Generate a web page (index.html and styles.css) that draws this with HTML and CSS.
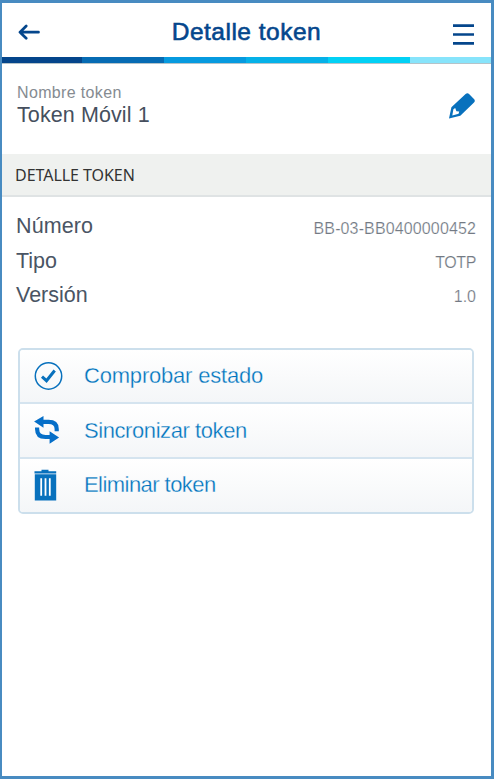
FILE: index.html
```html
<!DOCTYPE html>
<html lang="es">
<head>
<meta charset="utf-8">
<title>Detalle token</title>
<link rel="stylesheet" href="styles.css">
</head>
<body>
<main class="screen">
  <header class="topbar">
    <svg class="back" width="22" height="16" viewBox="0 0 22 16"><path d="M20.5 8.2H2M8.2 2 2 8.2l6.2 6" fill="none" stroke="#04468c" stroke-width="2.7" stroke-linecap="round" stroke-linejoin="round"/></svg>
    <h1 class="title">Detalle token</h1>
    <svg class="menu" width="21" height="22" viewBox="0 0 21 22"><path d="M0 1.6h21M0 10.5h21M0 19.4h21" stroke="#04468c" stroke-width="2.6"/></svg>
  </header>
  <div class="stripe"><i class="s1"></i><i class="s2"></i><i class="s3"></i><i class="s4"></i><i class="s5"></i><i class="s6"></i></div>
  <section class="name">
    <div>
      <p class="caption">Nombre token</p>
      <p class="value">Token Móvil 1</p>
    </div>
    <svg class="pencil" width="26" height="26" viewBox="0 0 26 26"><path fill="#0871bd" fill-rule="evenodd" d="M0 25.5 2.4 14.2 16.6 1Q18.5-.6 20.3 1.2L25.2 6.3Q26.5 7.8 25 9.6L11.3 22.8ZM3.3 22.4l6.3-1.6.6-2.2-2.8-.4-1.2-3.2-1.8 1.2Z"/></svg>
  </section>
  <h2 class="section">DETALLE TOKEN</h2>
  <dl class="details">
    <div class="row"><dt class="numero">Número</dt><dd class="code">BB-03-BB0400000452</dd></div>
    <div class="row"><dt>Tipo</dt><dd class="totp">TOTP</dd></div>
    <div class="row"><dt>Versión</dt><dd>1.0</dd></div>
  </dl>
  <nav class="actions">
    <a class="action"><svg width="30" height="30" viewBox="0 0 30 30"><circle cx="14.5" cy="15" r="13.2" fill="none" stroke="#0871bd" stroke-width="1.5"/><path d="m8 15.6 4.5 4.1 8.2-10.2" fill="none" stroke="#0871bd" stroke-width="3"/></svg><span class="a1">Comprobar estado</span></a>
    <a class="action"><svg width="30" height="30" viewBox="0 0 30 30"><g fill="none" stroke="#066fc8" stroke-width="4.2"><path d="M8 6.9h6.5q8.2 0 8.2 7v2.3"/><path d="M3.1 12.4v1.6q0 8 8.4 8H18"/></g><path fill="#066fc8" d="M.1 6.4 9.5 1v11.8ZM25.1 22.4 15.6 16.2v12.6Z"/></svg><span class="a2">Sincronizar token</span></a>
    <a class="action"><svg width="30" height="32" viewBox="0 0 30 32"><path fill="#0871bd" d="M.5 2.2h7V.8h7v1.4h7.7v2.4H.5ZM.8 5.2h21.4v26.2H.8Z"/><path d="M7.2 9.2v17.6M11.5 9.2v17.6M15.8 9.2v17.6" stroke="#fff" stroke-width="1.8"/></svg><span class="a3">Eliminar token</span></a>
  </nav>
</main>
</body>
</html>
```
FILE: styles.css
```css
* { box-sizing: border-box; }
body { margin: 0; background: #fff; font-family: "Liberation Sans", Arial, sans-serif; }
h1, h2, p, dl, dd { margin: 0; font-weight: 400; white-space: nowrap; }
.screen { height: 779px; border: solid #488bc1; border-width: 3px 3px 3px 2px; display: flex; flex-direction: column; }
.topbar { height: 54px; flex: none; display: flex; align-items: center; justify-content: space-between; padding: 4px 17px 0 16px; }
.title { font-size: 24.5px; line-height: 28px; color: #04468c; -webkit-text-stroke: .6px #04468c; letter-spacing: .5px; margin-bottom: 1px; }
.back { margin-bottom: 1px; }
.menu { margin-top: 5px; }
.stripe { height: 7px; flex: none; display: grid; grid-template-columns: 80px 82px 82px 82px 82px 1fr; border-bottom: 1px solid #b5c3c9; }
.s1 { background: #04458b; }
.s2 { background: #066bb3; }
.s3 { background: #069adf; }
.s4 { background: #05b1e8; }
.s5 { background: #02d1f5; }
.s6 { background: #87e4fb; }
.name { height: 90px; flex: none; display: flex; justify-content: space-between; padding: 20px 16px 0 15px; }
.caption { font-size: 16px; line-height: 18px; color: #858b91; letter-spacing: .35px; }
.value { font-size: 21.5px; line-height: 26px; color: #454f5e; letter-spacing: .1px; }
.pencil { margin-top: 9px; }
.section { height: 43px; flex: none; padding-left: 13px; background: #eff1ef; border-bottom: 2px solid #dfe3e4; font: 16px/42px "Noto Sans", sans-serif; color: #333; letter-spacing: -.05px; }
.details { padding: 12px 15px 0 14px; }
.row { height: 34.5px; display: flex; justify-content: space-between; align-items: baseline; }
.row dt { font-size: 21.5px; line-height: 34px; color: #4a5564; }
.row .numero { letter-spacing: .1px; }
.row dd { font-size: 16px; color: #737a84; -webkit-text-stroke: .2px #fff; }
.row .code { letter-spacing: .13px; position: relative; top: 1px; }
.row .totp { letter-spacing: -.4px; }
.actions { margin: 35px 17px 0 16px; border: 2px solid #ccdfec; border-radius: 5px; overflow: hidden; }
.action { height: 55px; display: flex; align-items: center; padding-left: 14px; background: linear-gradient(#fff, #f4f6f8); color: #0074be; font-size: 22px; border-bottom: 2px solid #d5e4ef; -webkit-text-stroke: .3px #fafbfc; }
.action:first-child { height: 54px; }
.action:last-child { height: 53px; border-bottom: 0; }
.action span { margin-left: 20px; padding-top: 1px; }
.action .a1 { letter-spacing: -.2px; }
.action .a2 { letter-spacing: -.42px; }
.action .a3 { letter-spacing: -.55px; padding: 0 0 1px; }
```
